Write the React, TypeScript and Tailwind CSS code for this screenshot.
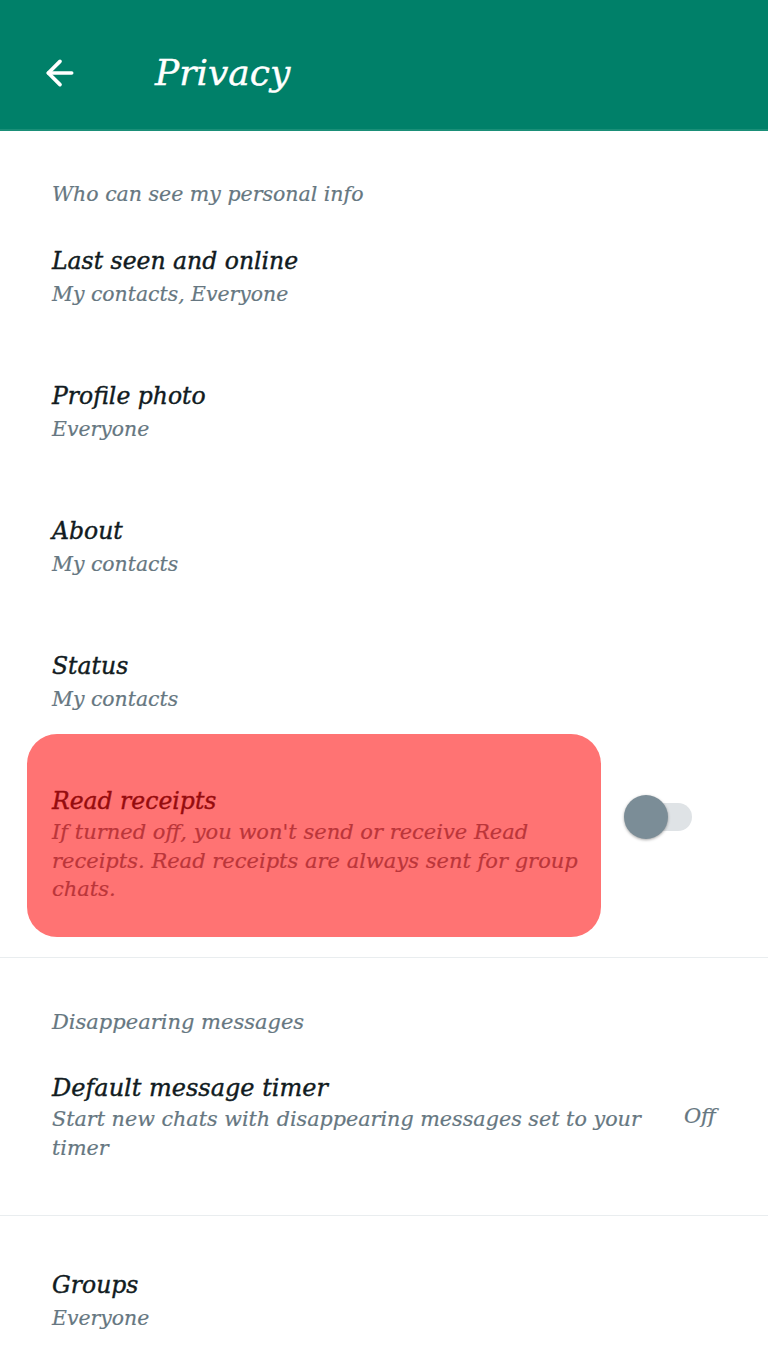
import { ArrowLeft } from 'lucide-react'

const serif = "font-['DejaVu_Serif','Liberation_Serif',serif] italic"
const titleCls = 'text-[23.5px] leading-[33px] text-[#111b21] [-webkit-text-stroke:0.4px_#111b21]'
const subCls = 'text-[20.4px] leading-[33px] text-[#667781] [-webkit-text-stroke:0.2px_#667781]'

function Item({ title, sub }: { title: string; sub: string }) {
  return (
    <div className="flex flex-col">
      <div className={titleCls}>{title}</div>
      <div className={subCls}>{sub}</div>
    </div>
  )
}

export default function App() {
  return (
    <div className={`w-[768px] min-h-[1365px] bg-white ${serif}`}>
      {/* App bar */}
      <div className="flex h-[131px] items-center bg-[#008069] pt-[16px] border-b-2 border-[#1a8f78]">
        <ArrowLeft className="ml-[40px] h-[40px] w-[40px] text-white" strokeWidth={2.2} />
        <div className="ml-[75px] text-[36px] leading-none text-white [-webkit-text-stroke:0.4px_white]">Privacy</div>
      </div>

      <div className="px-[52px]">
        <div className="pt-[50px] text-[20.5px] leading-[26px] text-[#667781] [-webkit-text-stroke:0.2px_#667781]">
          Who can see my personal info
        </div>

        <div className="mt-[38px] flex flex-col gap-[69px]">
          <Item title="Last seen and online" sub="My contacts, Everyone" />
          <Item title="Profile photo" sub="Everyone" />
          <Item title="About" sub="My contacts" />
          <Item title="Status" sub="My contacts" />

          {/* Read receipts with highlight overlay */}
          <div className="relative flex items-start">
            <div className="w-[540px] flex flex-col">
              <div className={titleCls}>Read receipts</div>
              <div className="text-[21px] leading-[28.5px] text-[#667781] [-webkit-text-stroke:0.2px_#667781]">
                If turned off, you won't send or receive Read receipts. Read receipts are always sent for group chats.
              </div>
            </div>
            <div className="ml-auto mr-[24px] mt-[10px] relative flex h-[44px] w-[68px] items-center">
              <div className="absolute right-0 h-[28px] w-[56px] rounded-full bg-[#dfe3e6]" />
              <div className="absolute left-0 h-[44px] w-[44px] rounded-full bg-[#7b8d97] shadow-[0_1px_3px_rgba(0,0,0,0.35)]" />
            </div>
            <div className="pointer-events-none absolute left-[-25px] top-[-51px] h-[203px] w-[574px] rounded-[30px] bg-[#ff0000]/55" />
          </div>
        </div>
      </div>

      <div className="mt-[53px] h-px bg-[#e9edef]" />

      <div className="px-[52px]">
        <div className="pt-[51px] text-[21px] leading-[26px] text-[#667781] [-webkit-text-stroke:0.2px_#667781]">
          Disappearing messages
        </div>
        <div className="mt-[37px] flex items-start">
          <div className="w-[600px] flex flex-col">
            <div className={`${titleCls} text-[24px]`}>Default message timer</div>
            <div className="text-[20.7px] leading-[29px] text-[#667781] [-webkit-text-stroke:0.2px_#667781]">
              Start new chats with disappearing messages set to your timer
            </div>
          </div>
          <div className="ml-auto mt-[30px] text-[21px] leading-[29px] text-[#667781] [-webkit-text-stroke:0.2px_#667781]">
            Off
          </div>
        </div>
      </div>

      <div className="mt-[52px] h-px bg-[#e9edef]" />

      <div className="px-[52px] pt-[53px]">
        <Item title="Groups" sub="Everyone" />
      </div>
    </div>
  )
}
